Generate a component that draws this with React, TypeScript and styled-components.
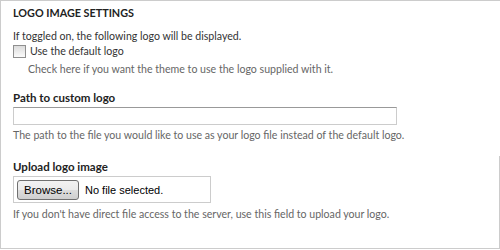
import * as React from 'react'
import styled, {createGlobalStyle} from 'styled-components'

const GlobalStyle = createGlobalStyle`
  html, body {
    margin: 0;
    padding: 0;
    background: #fff;
  }
  body {
    font-family: Lato, "Open Sans", sans-serif;
    font-size: 10.6px;
    color: #333;
  }
  *, *:before, *:after {
    box-sizing: border-box;
  }
`

const Panel = styled.fieldset`
  margin: 0;
  padding: 5px 0 0 12px;
  height: 249px;
  width: 500px;
  border: 0;
  border-top: 1px solid #ccc;
  border-left: 1px solid #ccc;
  border-bottom: 1px solid #ccc;
  display: flex;
  flex-direction: column;
`

const Heading = styled.h2`
  margin: 0 0 9px;
  font-size: 10.8px;
  line-height: 14px;
  font-weight: bold;
  text-transform: uppercase;
  color: #222;
`

const Text = styled.p<{$indent?: boolean; $muted?: boolean}>`
  margin: 0;
  padding-left: ${p => (p.$indent ? '15px' : '0')};
  line-height: 14px;
  color: ${p => (p.$muted ? '#666' : '#333')};
`

const CheckRow = styled.label`
  display: flex;
  align-items: center;
  gap: 4px;
  height: 14px;
  line-height: 14px;
  margin-top: 1px;
`

const Checkbox = styled.input`
  appearance: none;
  margin: 0;
  width: 13px;
  height: 13px;
  border: 1px solid #8f8f8f;
  background: linear-gradient(#dcdcdc, #fbfbfb);
`

const Item = styled.div<{$gap: number}>`
  margin-top: ${p => p.$gap}px;
  display: flex;
  flex-direction: column;
`

const Label = styled.label`
  font-size: 11.5px;
  font-weight: bold;
  line-height: 14px;
  margin-bottom: 2px;
  color: #222;
`

const TextInput = styled.input`
  width: 384px;
  height: 18px;
  margin: 0 0 3px;
  border: 1px solid #ccc;
  border-top-color: #999;
`

const UploadSection = styled.div`
  margin-top: 14px;
  padding-top: 4px;
  border-right: 1px solid #ccc;
  flex: 1;
  display: flex;
  flex-direction: column;
`

const FileBox = styled.div`
  width: 198px;
  height: 27px;
  border: 1px solid #ccc;
  display: flex;
  align-items: center;
  gap: 6px;
  padding-left: 3px;
  margin-bottom: 4px;
  font-family: "Liberation Sans", Arial, sans-serif;
  font-size: 11px;
  color: #000;
`

const Browse = styled.button`
  width: 62px;
  height: 20px;
  padding: 0;
  border: 1px solid #707070;
  border-radius: 3px;
  background: linear-gradient(#f2f2f2 0%, #ebebeb 50%, #dddddd 51%, #cfcfcf 100%);
  font-family: "Liberation Sans", Arial, sans-serif;
  font-size: 11.5px;
  color: #000;
`

export default function App() {
  return (
    <>
      <GlobalStyle />
      <Panel>
        <Heading>Logo image settings</Heading>
        <Text>If toggled on, the following logo will be displayed.</Text>
        <CheckRow>
          <Checkbox type="checkbox" />
          Use the default logo
        </CheckRow>
        <Item $gap={4}>
          <Text $indent $muted>
            Check here if you want the theme to use the logo supplied with it.
          </Text>
        </Item>
        <Item $gap={15}>
          <Label>Path to custom logo</Label>
          <TextInput type="text" />
          <Text $muted>
            The path to the file you would like to use as your logo file instead of the default logo.
          </Text>
        </Item>
        <UploadSection>
          <Label>Upload logo image</Label>
          <FileBox>
            <Browse type="button">Browse...</Browse>
            <span>No file selected.</span>
          </FileBox>
          <Text $muted>
            If you don't have direct file access to the server, use this field to upload your logo.
          </Text>
        </UploadSection>
      </Panel>
    </>
  )
}
